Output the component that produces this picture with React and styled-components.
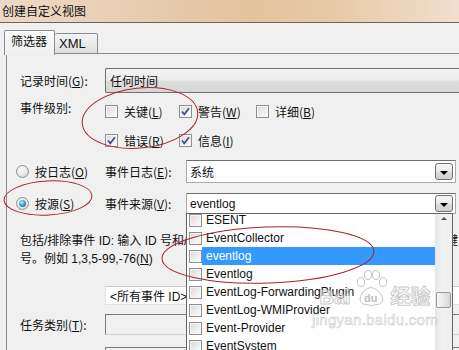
import React from "react";
import styled, { createGlobalStyle } from "styled-components";

const GlobalStyle = createGlobalStyle`
  html, body {
    margin: 0;
    padding: 0;
    background: #f0f0f0;
  }
  body {
    font-family: "Liberation Sans", "Noto Sans CJK SC", sans-serif;
    font-size: 12px;
    color: #111;
  }
  u {
    text-underline-offset: 1px;
  }
`;

const levels = [
  { label: "关键", key: "L", checked: false },
  { label: "警告", key: "W", checked: true },
  { label: "详细", key: "B", checked: false },
  { label: "错误", key: "R", checked: true },
  { label: "信息", key: "I", checked: true },
];

const sources = [
  "ESENT",
  "EventCollector",
  "eventlog",
  "Eventlog",
  "EventLog-ForwardingPlugin",
  "EventLog-WMIProvider",
  "Event-Provider",
  "EventSystem",
  "Fax",
];

const CheckMark = () => (
  <svg width="11" height="11" viewBox="0 0 11 11">
    <path d="M2 5.5 L4.3 8.3 L9 2.2" fill="none" stroke="#3d4f86" strokeWidth="1.7" />
  </svg>
);

const Check = ({ checked }) => <CheckBox>{checked && <CheckMark />}</CheckBox>;

const Combo = ({ children, list }) => (
  <ComboBox>
    <ComboText>{children}</ComboText>
    <DropButton>
      <Arrow />
    </DropButton>
    {list}
  </ComboBox>
);

const SourceList = () => (
  <ListBox>
    <ListItems>
      <ListInner>
        {sources.map((s) => (
          <ListItem key={s}>
            <Check />
            <ItemText selected={s === "eventlog"}>{s}</ItemText>
          </ListItem>
        ))}
      </ListInner>
    </ListItems>
    <ScrollBar>
      <UpArrow />
      <Thumb offset={72} />
    </ScrollBar>
  </ListBox>
);

const Watermark = () => (
  <Mark>
    <MarkTop>
      <span>Bai</span>
      <svg width="36" height="38" viewBox="0 0 36 38">
        <g fill="rgba(255,255,255,0.55)" stroke="rgba(150,150,150,0.55)" strokeWidth="1">
          <ellipse cx="8" cy="12" rx="3.5" ry="4.5" />
          <ellipse cx="15" cy="5" rx="3.5" ry="4.5" />
          <ellipse cx="23" cy="5" rx="3.5" ry="4.5" />
          <ellipse cx="30" cy="12" rx="3.5" ry="4.5" />
          <path d="M10 22 Q18 13 26 22 Q33 30 27 34 Q18 37 10 34 Q4 30 10 22 Z" />
        </g>
        <text x="11" y="32" fontSize="11" fontFamily="Liberation Sans, sans-serif" fill="rgba(160,160,160,0.7)">du</text>
      </svg>
      <span>经验</span>
    </MarkTop>
    <MarkUrl>jingyan.baidu.com</MarkUrl>
  </Mark>
);

export default function App() {
  return (
    <>
      <GlobalStyle />
      <Window>
        <TitleBar>创建自定义视图</TitleBar>
        <Body>
          <Tabs>
            <Tab active>筛选器</Tab>
            <Tab>XML</Tab>
          </Tabs>
          <Panel>
            <FieldRow top={14} height={25}>
              <Label>记录时间(<u>G</u>):</Label>
              <ReadOnlyField>任何时间</ReadOnlyField>
            </FieldRow>

            <LevelRow>
              <LevelLabel>事件级别:</LevelLabel>
              <LevelGrid>
                {levels.map((l) => (
                  <LevelItem key={l.key}>
                    <Check checked={l.checked} />
                    <span>
                      {l.label}(<u>{l.key}</u>)
                    </span>
                  </LevelItem>
                ))}
              </LevelGrid>
            </LevelRow>

            <RadioRow top={12} height={23}>
              <RadioCell>
                <Radio />
                <span>
                  按日志(<u>O</u>)
                </span>
              </RadioCell>
              <SubLabel>
                事件日志(<u>E</u>):
              </SubLabel>
              <Combo>系统</Combo>
            </RadioRow>

            <RadioRow top={10} height={21} raised>
              <RadioCell>
                <Radio selected />
                <span>
                  按源(<u>S</u>)
                </span>
              </RadioCell>
              <SubLabel>
                事件来源(<u>V</u>):
              </SubLabel>
              <Combo list={<SourceList />}>eventlog</Combo>
            </RadioRow>

            <Description>
              <div>包括/排除事件 ID: 输入 ID 号和/或 ID 范围，使用逗号分隔。若要排除条件，请先键入减</div>
              <div>
                号。例如 1,3,5-99,-76(<u>N</u>)
              </div>
            </Description>

            <FieldRow top={18} height={19}>
              <Label />
              <TextField>&lt;所有事件 ID&gt;</TextField>
            </FieldRow>

            <FieldRow top={9} height={21}>
              <Label>
                任务类别(<u>T</u>):
              </Label>
              <DisabledField />
            </FieldRow>

            <FieldRow top={12} height={21}>
              <Label />
              <DisabledField />
            </FieldRow>
          </Panel>
        </Body>

        <Watermark />

        <Annotations width="459" height="350" viewBox="0 0 459 350">
          <g fill="none" stroke="#a8232d" strokeWidth="1">
            <ellipse cx="140" cy="118" rx="58" ry="30" transform="rotate(-6 140 118)" />
            <ellipse cx="48" cy="198" rx="44" ry="17" transform="rotate(-3 48 198)" />
            <ellipse cx="268" cy="255" rx="106" ry="28" transform="rotate(-2 268 255)" />
          </g>
        </Annotations>
      </Window>
    </>
  );
}

const Window = styled.div`
  position: relative;
  width: 459px;
  height: 350px;
  overflow: hidden;
  background: #f0f0f0;
`;

const TitleBar = styled.div`
  height: 22px;
  line-height: 21px;
  padding-left: 2px;
  font-family: "Noto Sans CJK SC", sans-serif;
  font-size: 12px;
  color: #111;
  background: linear-gradient(
    to right,
    #ecd9c5 0%,
    #e8cdb0 30%,
    #e4c29e 55%,
    #e9cba9 75%,
    #f0dfcf 100%
  );
  border-bottom: 1px solid #6d655e;
`;

const Body = styled.div`
  width: 520px;
  padding: 7px 0 0 4px;
`;

const Tabs = styled.div`
  display: flex;
  align-items: flex-end;
  height: 24px;
  position: relative;
  z-index: 2;
`;

const Tab = styled.div`
  box-sizing: border-box;
  height: ${(p) => (p.active ? "25px" : "21px")};
  width: ${(p) => (p.active ? "51px" : "43px")};
  padding-left: ${(p) => (p.active ? "6px" : "4px")};
  line-height: ${(p) => (p.active ? "22px" : "19px")};
  font-family: "Liberation Sans", "Noto Sans CJK SC", sans-serif;
  font-size: ${(p) => (p.active ? "12px" : "13px")};
  border: 1px solid #898c95;
  border-bottom: ${(p) => (p.active ? "none" : "1px solid #898c95")};
  border-left: ${(p) => (p.active ? "1px solid #898c95" : "none")};
  border-radius: 2px 2px 0 0;
  background: ${(p) =>
    p.active
      ? "linear-gradient(#fbfbfb, #f3f3f3 60%, #f0f0f0)"
      : "linear-gradient(#f4f4f4, #e9e9e9 50%, #dfdfdf)"};
  align-self: ${(p) => (p.active ? "flex-start" : "flex-end")};
`;

const Panel = styled.div`
  position: relative;
  z-index: 1;
  margin: -1px 0 0 2px;
  height: 320px;
  padding-left: 13px;
  border-top: 1px solid #898c95;
  border-left: 1px solid #898c95;
  background: #f0f0f0;
`;

const FieldRow = styled.div`
  display: flex;
  align-items: center;
  margin-top: ${(p) => p.top}px;
  height: ${(p) => p.height}px;
`;

const Label = styled.div`
  flex: 0 0 85px;
  font-family: "Noto Sans CJK SC", sans-serif;
  font-size: 12px;
  white-space: nowrap;
`;

const ReadOnlyField = styled.div`
  flex: 1;
  align-self: stretch;
  display: flex;
  align-items: center;
  padding-left: 4px;
  font-family: "Noto Sans CJK SC", sans-serif;
  border: 1px solid #707070;
  border-right: none;
  border-radius: 2px 0 0 2px;
  background: linear-gradient(#f4f4f4, #ececec 48%, #dfdfdf 52%, #d6d6d6);
`;

const LevelRow = styled.div`
  display: flex;
  margin-top: 10px;
`;

const LevelLabel = styled(Label)`
  line-height: 16px;
  margin-top: -3px;
`;

const LevelGrid = styled.div`
  display: grid;
  grid-template-columns: 74px 77px auto;
  grid-auto-rows: 16px;
  row-gap: 13px;
`;

const LevelItem = styled.div`
  display: flex;
  align-items: center;
  gap: 6px;
  font-family: "Noto Sans CJK SC", sans-serif;
  white-space: nowrap;
`;

const CheckBox = styled.span`
  box-sizing: border-box;
  flex: 0 0 13px;
  width: 13px;
  height: 13px;
  display: flex;
  align-items: center;
  justify-content: center;
  border: 1px solid #8e8f8f;
  background: linear-gradient(135deg, #d6d7d9 0%, #eeeeee 55%, #fbfbfb 100%);
  box-shadow: inset 0 0 0 1px #f6f6f6;
`;

const RadioRow = styled.div`
  display: flex;
  align-items: center;
  margin-left: -4px;
  margin-top: ${(p) => p.top}px;
  height: ${(p) => p.height}px;
  position: relative;
  z-index: ${(p) => (p.raised ? 3 : 1)};
`;

const RadioCell = styled.div`
  flex: 0 0 89px;
  display: flex;
  align-items: center;
  gap: 6px;
  font-family: "Noto Sans CJK SC", sans-serif;
  white-space: nowrap;
`;

const Radio = styled.span`
  box-sizing: border-box;
  width: 13px;
  height: 13px;
  border-radius: 50%;
  border: 1px solid #8e8f8f;
  background: radial-gradient(circle at 40% 35%, #ffffff 0%, #e6e6e6 55%, #cfcfcf 100%);
  display: flex;
  align-items: center;
  justify-content: center;

  &::after {
    content: "";
    display: ${(p) => (p.selected ? "block" : "none")};
    width: 7px;
    height: 7px;
    border-radius: 50%;
    background: radial-gradient(circle at 40% 35%, #b9ecff 0%, #3ea3e0 45%, #0d4f8f 100%);
  }
`;

const SubLabel = styled.div`
  flex: 0 0 81px;
  font-family: "Noto Sans CJK SC", sans-serif;
  white-space: nowrap;
`;

const ComboBox = styled.div`
  position: relative;
  box-sizing: border-box;
  width: 270px;
  height: 100%;
  display: flex;
  align-items: center;
  padding-left: 3px;
  background: #fff;
  border: 1px solid #a9abb0;
  border-top-color: #6f6f6f;
`;

const ComboText = styled.span`
  flex: 1;
  font-family: "Liberation Sans", "Noto Sans CJK SC", sans-serif;
`;

const DropButton = styled.span`
  box-sizing: border-box;
  width: 18px;
  height: 17px;
  margin-right: 2px;
  display: flex;
  align-items: center;
  justify-content: center;
  border: 1px solid #707070;
  border-radius: 3px;
  background: linear-gradient(#f6f6f6, #ececec 48%, #dcdcdc 52%, #d0d0d0);
`;

const Arrow = styled.span`
  width: 0;
  height: 0;
  margin-top: 2px;
  border-left: 4px solid transparent;
  border-right: 4px solid transparent;
  border-top: 4px solid #000;
`;

const ListBox = styled.div`
  position: absolute;
  left: -1px;
  top: 100%;
  box-sizing: border-box;
  width: 267px;
  height: 160px;
  display: flex;
  background: #fff;
  border: 1px solid #646464;
`;

const ListItems = styled.div`
  flex: 1;
  overflow: hidden;
`;

const ListInner = styled.div`
  margin-top: -3px;
`;

const ListItem = styled.div`
  height: 18px;
  display: flex;
  align-items: center;
  padding-left: 2px;
`;

const ItemText = styled.span`
  flex: 1;
  align-self: stretch;
  display: flex;
  align-items: center;
  margin-left: 0;
  padding-left: 4px;
  font-family: "Liberation Sans", sans-serif;
  font-size: 12px;
  color: ${(p) => (p.selected ? "#fff" : "#111")};
  background: ${(p) => (p.selected ? "#3399ff" : "transparent")};
`;

const ScrollBar = styled.div`
  flex: 0 0 17px;
  display: flex;
  flex-direction: column;
  align-items: center;
  background: linear-gradient(to right, #e6e6e6, #f2f2f2 40%, #f0f0f0);
`;

const UpArrow = styled.span`
  margin-top: 3px;
  width: 0;
  height: 0;
  border-left: 3px solid transparent;
  border-right: 3px solid transparent;
  border-bottom: 3px solid #4d4d4d;
`;

const Thumb = styled.span`
  box-sizing: border-box;
  margin-top: ${(p) => p.offset}px;
  width: 15px;
  height: 16px;
  border: 1px solid #979797;
  border-radius: 2px;
  background: linear-gradient(to right, #f7f7f7, #e9e9e9 50%, #d6d6d6);
`;

const Description = styled.div`
  margin-top: 18px;
  line-height: 18px;
  font-family: "Liberation Sans", "Noto Sans CJK SC", sans-serif;
  white-space: nowrap;
`;

const TextField = styled.div`
  flex: 1;
  align-self: stretch;
  display: flex;
  align-items: center;
  padding-left: 4px;
  background: #fff;
  border: 1px solid #e2e3ea;
  border-top-color: #c9cbd2;
  font-family: "Liberation Sans", "Noto Sans CJK SC", sans-serif;
`;

const DisabledField = styled.div`
  flex: 1;
  align-self: stretch;
  background: #f0f0f0;
  border: 1px solid #d4d4d4;
  border-top-color: #7a7a7a;
  border-left-color: #7a7a7a;
`;

const Mark = styled.div`
  position: absolute;
  left: 312px;
  top: 270px;
  z-index: 5;
  pointer-events: none;
  display: flex;
  flex-direction: column;
  align-items: center;
  color: rgba(255, 255, 255, 0.55);
  -webkit-text-stroke: 1px rgba(150, 150, 150, 0.5);
`;

const MarkTop = styled.div`
  display: flex;
  align-items: flex-end;
  gap: 2px;
  font-family: "Liberation Sans", "Noto Sans CJK SC", sans-serif;
  font-size: 20px;
  font-weight: bold;
  line-height: 22px;
`;

const MarkUrl = styled.div`
  margin-top: 3px;
  font-family: "Liberation Sans", sans-serif;
  font-size: 15px;
  letter-spacing: 0.3px;
  -webkit-text-stroke: 0.6px rgba(150, 150, 150, 0.5);
`;

const Annotations = styled.svg`
  position: absolute;
  left: 0;
  top: 0;
  z-index: 10;
  pointer-events: none;
`;
